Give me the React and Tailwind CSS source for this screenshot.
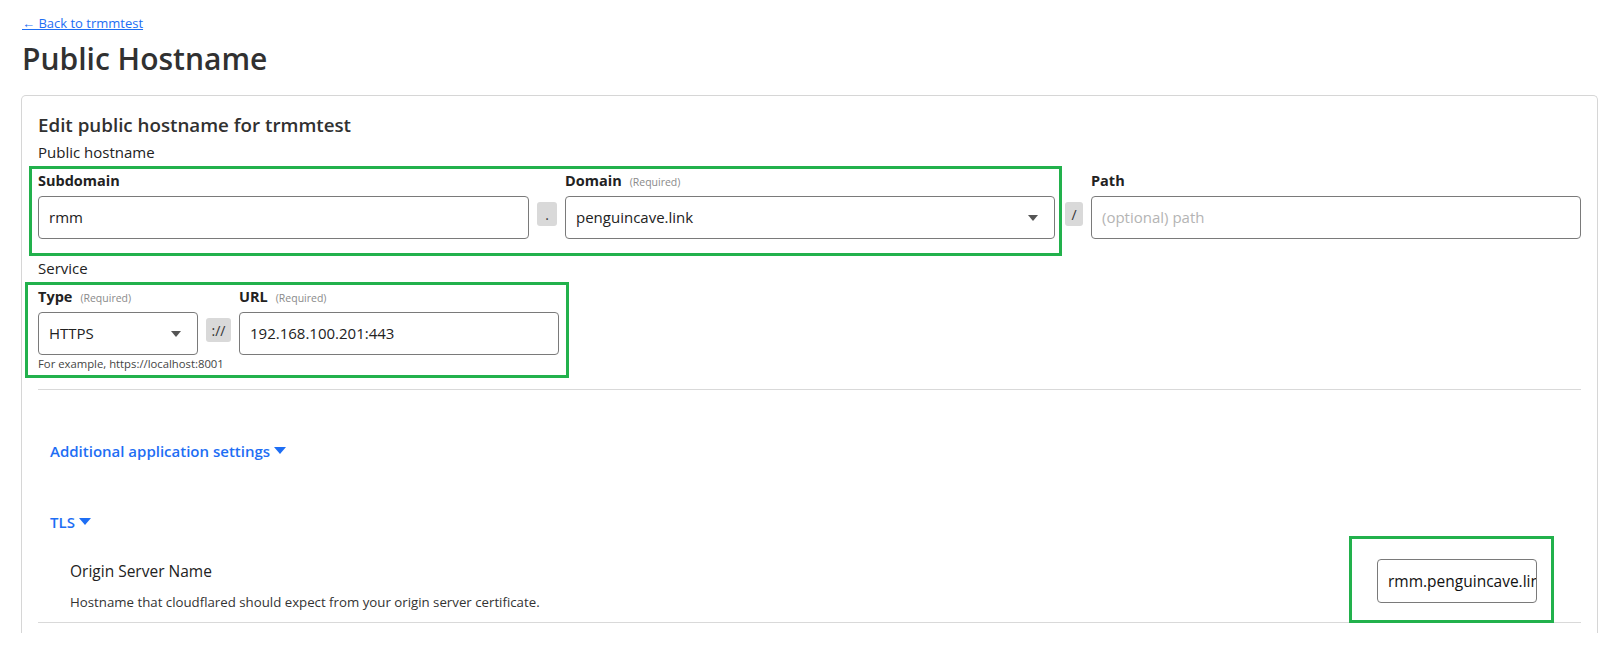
import React from "react";

const font = { fontFamily: '"Open Sans", "Noto Sans", sans-serif' };

function Label({ text, required }) {
  return (
    <div className="flex items-baseline gap-[8px] h-[20px] mb-[6px]">
      <span className="text-[14.5px] font-bold text-[#222]">{text}</span>
      {required && <span className="text-[10.5px] text-[#8a8a8a]">(Required)</span>}
    </div>
  );
}

function Box({ value, placeholder, select, className = "" }) {
  return (
    <div
      className={`h-[43px] border border-[#7a7a7a] rounded-[4px] flex items-center justify-between pl-[10px] pr-[16px] text-[15px] ${className}`}
    >
      {value ? (
        <span className="text-[#222]">{value}</span>
      ) : (
        <span className="text-[#b4b4b4]">{placeholder}</span>
      )}
      {select && (
        <svg width="10" height="6" viewBox="0 0 10 6">
          <path d="M0 0h10L5 6z" fill="#555" />
        </svg>
      )}
    </div>
  );
}

function Sep({ children, w = "w-[20px]" }) {
  return (
    <div
      className={`${w} h-[24px] mb-[13px] rounded-[3px] bg-[#d9d9d9] flex items-center justify-center text-[14px] text-[#333] shrink-0`}
    >
      {children}
    </div>
  );
}

function Mark({ className }) {
  return <div className={`absolute border-[3px] border-[#22b14c] pointer-events-none ${className}`} />;
}

function Caret() {
  return (
    <svg width="12" height="7" viewBox="0 0 12 7" className="ml-[4px] mb-[1px]">
      <path d="M0 0h12L6 7z" fill="#1e6ef4" />
    </svg>
  );
}

export default function App() {
  return (
    <div className="min-h-screen bg-white pl-[21px] pr-[15px] pt-[14px]" style={font}>
      <a href="#" className="text-[13px] text-[#1e6ef4] underline leading-[18px] block ml-[1px]">
        ← Back to trmmtest
      </a>
      <h1 className="text-[30px] font-semibold text-[#313131] leading-[40px] mt-[7px] ml-[1px]">Public Hostname</h1>

      <div className="mt-[16px] border border-b-0 border-[#d6d6d6] rounded-t-[5px] px-[16px] pt-[15px] pb-[10px]">
        <h2 className="text-[18.75px] font-semibold text-[#313131] leading-[28px]">Edit public hostname for trmmtest</h2>
        <div className="text-[15px] text-[#222] leading-[20px] mt-[3px]">Public hostname</div>

        <div className="flex items-end mt-[8px]">
          <div className="relative flex items-end gap-[8px] shrink-0">
            <Mark className="-left-[9px] -right-[7px] -top-[4px] -bottom-[17px]" />
            <div className="w-[491px]">
              <Label text="Subdomain" />
              <Box value="rmm" />
            </div>
            <Sep>.</Sep>
            <div className="w-[490px]">
              <Label text="Domain" required />
              <Box value="penguincave.link" select />
            </div>
          </div>
          <div className="ml-[10px] mr-[8px]">
            <Sep w="w-[18px]">/</Sep>
          </div>
          <div className="flex-1">
            <Label text="Path" />
            <Box placeholder="(optional) path" />
          </div>
        </div>

        <div className="text-[15px] text-[#222] leading-[20px] mt-[19px]">Service</div>

        <div className="relative w-fit mt-[8px]">
          <Mark className="-left-[13px] -right-[10px] -top-[4px] -bottom-[6px]" />
          <div className="flex items-end gap-[8px]">
            <div className="w-[160px]">
              <Label text="Type" required />
              <Box value="HTTPS" select />
            </div>
            <Sep w="w-[25px]">://</Sep>
            <div className="w-[320px]">
              <Label text="URL" required />
              <Box value="192.168.100.201:443" />
            </div>
          </div>
          <div className="text-[11.3px] text-[#444] leading-[16px] mt-[1px]">For example, https://localhost:8001</div>
        </div>

        <div className="border-t border-[#d9d9d9] mt-[17px]" />

        <div className="pl-[12px]">
          <div className="flex items-center mt-[51px] h-[20px] text-[15px] font-semibold text-[#1e6ef4]">
            Additional application settings
            <Caret />
          </div>
          <div className="flex items-center mt-[51px] h-[20px] text-[15px] font-semibold text-[#1e6ef4]">
            TLS
            <Caret />
          </div>
        </div>

        <div className="flex items-start justify-between pl-[32px] pr-[44px] mt-[28px]">
          <div>
            <div className="text-[15.5px] font-medium text-[#222] leading-[22px]">Origin Server Name</div>
            <div className="text-[13.25px] text-[#333] leading-[16px] mt-[12px]">
              Hostname that cloudflared should expect from your origin server certificate.
            </div>
          </div>
          <div className="relative -mt-[1px]">
            <Mark className="-left-[28px] -right-[17px] -top-[23px] -bottom-[20px]" />
            <input
              readOnly
              defaultValue="rmm.penguincave.link"
              className="w-[160px] h-[44px] border border-[#7a7a7a] rounded-[4px] pl-[10px] text-[15.5px] text-[#111] outline-none bg-white"
            />
          </div>
        </div>

        <div className="border-t border-[#d9d9d9] mt-[12px]" />
      </div>
    </div>
  );
}
